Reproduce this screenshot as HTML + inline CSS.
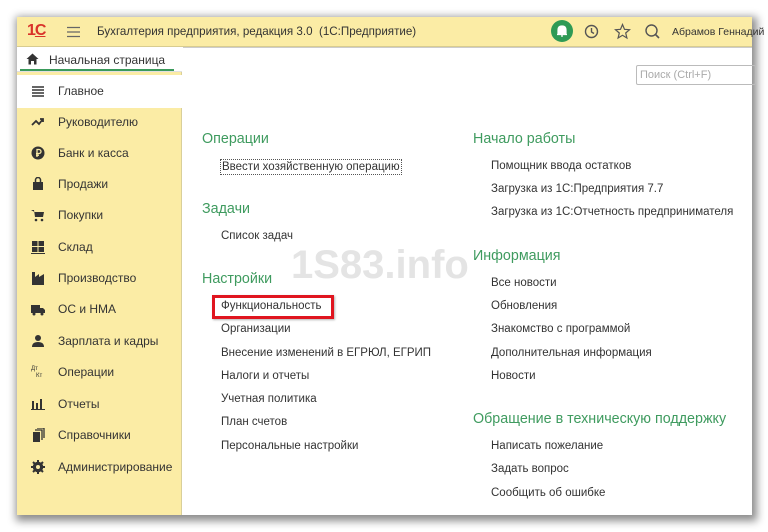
<!DOCTYPE html>
<html><head><meta charset="utf-8"><style>
*{margin:0;padding:0;box-sizing:border-box}
body{width:768px;height:532px;background:#fff;font-family:"Liberation Sans",sans-serif;position:relative;overflow:hidden;color:#333}
.win{position:absolute;left:17px;top:17px;width:735px;height:498px;background:#fff;box-shadow:2px 3px 8px 3px rgba(0,0,0,.45)}
.hdr{position:absolute;left:0;top:0;width:735px;height:30px;background:#fbeca5;border-bottom:1px solid #d8cc90}
.side{position:absolute;left:0;top:30px;width:165px;height:468px;background:#fbeca5;border-right:1px solid #d9cf9a}
.tab{position:absolute;left:0;top:0;width:165px;height:25px;background:#fbeca5}
.tab .in{position:absolute;left:0;top:0;width:165px;height:25px;background:#fff;border-bottom:1px solid #e0e0e0}
.tab .ul{position:absolute;left:3px;top:22px;width:154px;height:2px;background:#3a9a5b}
.it{position:absolute;left:0;width:165px;height:31px;font-size:12px;line-height:31px;padding-left:41px;color:#333}
.ic{position:absolute;left:14px;top:8px;width:14px;height:14px}
.main{position:absolute;left:166px;top:30px;width:569px;height:468px;background:#fff;border-top:1px solid #ccc}
.h{position:absolute;font-size:14.3px;color:#3f9b5f}
.l{position:absolute;font-size:11.5px;color:#333;white-space:nowrap}
</style></head><body>
<div class="win">
 <div class="hdr">
  <span style="position:absolute;left:10px;top:5px;font-size:16px;font-weight:bold;color:#d9322a;letter-spacing:-1px">1<span style="text-decoration:underline">С</span></span>
  <svg style="position:absolute;left:50px;top:9px" width="13" height="12"><path d="M0 1.5H13M0 6H13M0 10.5H13" stroke="#666" stroke-width="1.3"/></svg>
  <span style="position:absolute;left:80px;top:8px;font-size:11.6px;color:#333">Бухгалтерия предприятия, редакция 3.0&nbsp; (1С:Предприятие)</span>
  <div style="position:absolute;left:534px;top:3px;width:22px;height:22px;border-radius:50%;background:#2e9a55"></div>
  <svg style="position:absolute;left:538px;top:7px" width="14" height="14"><path d="M3 10 L3 6 Q3 2 7 2 Q11 2 11 6 L11 10 Z M2 10.5H12 M6 12H8" fill="#fff" stroke="#fff" stroke-width="1.2"/></svg>
  <svg style="position:absolute;left:566px;top:6px" width="17" height="17"><circle cx="8.5" cy="8.5" r="6" fill="none" stroke="#555" stroke-width="1.4"/><path d="M8.5 5V9L11 10.5" fill="none" stroke="#555" stroke-width="1.4"/></svg>
  <svg style="position:absolute;left:597px;top:6px" width="17" height="17"><path d="M8.5 1.5L10.5 6.3 15.5 6.7 11.7 10 12.9 15 8.5 12.3 4.1 15 5.3 10 1.5 6.7 6.5 6.3Z" fill="none" stroke="#555" stroke-width="1.2"/></svg>
  <svg style="position:absolute;left:627px;top:6px" width="17" height="17"><circle cx="7.5" cy="7.5" r="5.5" fill="none" stroke="#555" stroke-width="1.4"/><path d="M11.5 11.5L15 15" stroke="#555" stroke-width="1.6"/></svg>
  <span style="position:absolute;left:655px;top:9px;font-size:10.5px;color:#333;white-space:nowrap">Абрамов Геннадий</span>
 </div>
 <div class="side">
  <div class="tab"><div class="in"></div><div class="ul"></div>
   <svg style="position:absolute;left:9px;top:6px" width="13" height="12"><path d="M6.5 0.5L0.5 6H2.5V11.5H5V8H8V11.5H10.5V6H12.5Z" fill="#333"/></svg>
   <span style="position:absolute;left:32px;top:6px;font-size:12px;color:#333">Начальная страница</span></div>
  <div class="it" style="top:28px;background:#fff;height:33px;line-height:33px"><svg class="ic" viewBox="0 0 14 14" style="top:10px"><path d="M1 2H13M1 5H13M1 8H13M1 11H13" stroke="#333" stroke-width="1.5"/></svg>Главное</div>
  <div class="it" style="top:60px"><svg class="ic" viewBox="0 0 14 14"><path d="M1 10L5 6 8 9 12 4M9 4H12V7" fill="none" stroke="#333" stroke-width="1.8"/></svg>Руководителю</div>
  <div class="it" style="top:91px"><svg class="ic" viewBox="0 0 14 14"><circle cx="7" cy="7" r="6.5" fill="#333"/><path d="M6 11V3.5H8A2 2 0 0 1 8 7.5H5M5 9.2H8" fill="none" stroke="#fbeca5" stroke-width="1.3"/></svg>Банк и касса</div>
  <div class="it" style="top:122px"><svg class="ic" viewBox="0 0 14 14"><rect x="2" y="5" width="10" height="8" fill="#333"/><path d="M4.5 5V3A2.5 2.5 0 0 1 9.5 3V5" fill="none" stroke="#333" stroke-width="1.5"/></svg>Продажи</div>
  <div class="it" style="top:153px"><svg class="ic" viewBox="0 0 14 14"><path d="M0 2H3L4 9H12L13 4H3.5Z" fill="#333"/><circle cx="5" cy="12" r="1.3" fill="#333"/><circle cx="11" cy="12" r="1.3" fill="#333"/></svg>Покупки</div>
  <div class="it" style="top:185px"><svg class="ic" viewBox="0 0 14 14"><path d="M1 1H6.5V6H1ZM7.5 1H13V6H7.5ZM1 7H6.5V12H1ZM7.5 7H13V12H7.5ZM0 13H14V14H0Z" fill="#333"/></svg>Склад</div>
  <div class="it" style="top:216px"><svg class="ic" viewBox="0 0 14 14"><path d="M1 14V1H4V6L8 3V6L13 3V14Z" fill="#333"/></svg>Производство</div>
  <div class="it" style="top:247px"><svg class="ic" viewBox="0 0 14 14"><path d="M0 3H9V11H0ZM9 6H12L14 8V11H9Z" fill="#333"/><circle cx="3" cy="12" r="1.5" fill="#333"/><circle cx="11" cy="12" r="1.5" fill="#333"/></svg>ОС и НМА</div>
  <div class="it" style="top:279px"><svg class="ic" viewBox="0 0 14 14"><circle cx="7" cy="4" r="3" fill="#333"/><path d="M1 13Q1 8 7 8Q13 8 13 13Z" fill="#333"/></svg>Зарплата и кадры</div>
  <div class="it" style="top:310px"><span style="position:absolute;left:14px;top:9px;font-size:6px;line-height:6px;color:#333">Дт</span><span style="position:absolute;left:19px;top:16px;font-size:6px;line-height:6px;color:#333">Кт</span>Операции</div>
  <div class="it" style="top:342px"><svg class="ic" viewBox="0 0 14 14"><path d="M1 4H3V12H1ZM5 6H7V12H5ZM9 2H11V12H9ZM0 12H14V13H0Z" fill="#333"/></svg>Отчеты</div>
  <div class="it" style="top:373px"><svg class="ic" viewBox="0 0 14 14"><path d="M2 4H9V14H2Z" fill="#333"/><path d="M4 2H11V12M6 0H13V10" fill="none" stroke="#333" stroke-width="1.3"/></svg>Справочники</div>
  <div class="it" style="top:405px"><svg class="ic" viewBox="0 0 14 14"><circle cx="7" cy="7" r="4" fill="none" stroke="#333" stroke-width="2.5"/><path d="M7 0V14M0 7H14M2 2L12 12M12 2L2 12" stroke="#333" stroke-width="2"/><circle cx="7" cy="7" r="2" fill="#fbeca5"/></svg>Администрирование</div>
 </div>
 <div class="main">
  <div style="position:absolute;left:453px;top:17px;width:120px;height:20px;border:1px solid #bbb;border-radius:2px;font-size:11px;color:#aaa;padding:3px 0 0 3px">Поиск (Ctrl+F)</div>
  <div style="position:absolute;left:108px;top:195px;font-size:40px;font-weight:bold;color:#e4e4e4">1S83.info</div>
  <div class="h" style="left:19px;top:83px">Операции</div>
  <div class="l" style="left:37px;top:111px;border:1px dotted #555;padding:1px 1px">Ввести хозяйственную операцию</div>
  <div class="h" style="left:19px;top:153px">Задачи</div>
  <div class="l" style="left:38px;top:182px">Список задач</div>
  <div class="h" style="left:19px;top:223px">Настройки</div>
  <div style="position:absolute;left:29px;top:247px;width:122px;height:24px;border:3px solid #e0151f;box-shadow:1px 1px 2px rgba(0,0,0,.3)"></div>
  <div class="l" style="left:38px;top:252px">Функциональность</div>
  <div class="l" style="left:38px;top:275px">Организации</div>
  <div class="l" style="left:38px;top:299px">Внесение изменений в ЕГРЮЛ, ЕГРИП</div>
  <div class="l" style="left:38px;top:322px">Налоги и отчеты</div>
  <div class="l" style="left:38px;top:345px">Учетная политика</div>
  <div class="l" style="left:38px;top:368px">План счетов</div>
  <div class="l" style="left:38px;top:392px">Персональные настройки</div>
  <div class="h" style="left:290px;top:83px">Начало работы</div>
  <div class="l" style="left:308px;top:112px">Помощник ввода остатков</div>
  <div class="l" style="left:308px;top:135px">Загрузка из 1С:Предприятия 7.7</div>
  <div class="l" style="left:308px;top:158px">Загрузка из 1С:Отчетность предпринимателя</div>
  <div class="h" style="left:290px;top:200px">Информация</div>
  <div class="l" style="left:308px;top:229px">Все новости</div>
  <div class="l" style="left:308px;top:252px">Обновления</div>
  <div class="l" style="left:308px;top:275px">Знакомство с программой</div>
  <div class="l" style="left:308px;top:299px">Дополнительная информация</div>
  <div class="l" style="left:308px;top:322px">Новости</div>
  <div class="h" style="left:290px;top:363px">Обращение в техническую поддержку</div>
  <div class="l" style="left:308px;top:392px">Написать пожелание</div>
  <div class="l" style="left:308px;top:415px">Задать вопрос</div>
  <div class="l" style="left:308px;top:439px">Сообщить об ошибке</div>
 </div>
</div>
</body></html>
